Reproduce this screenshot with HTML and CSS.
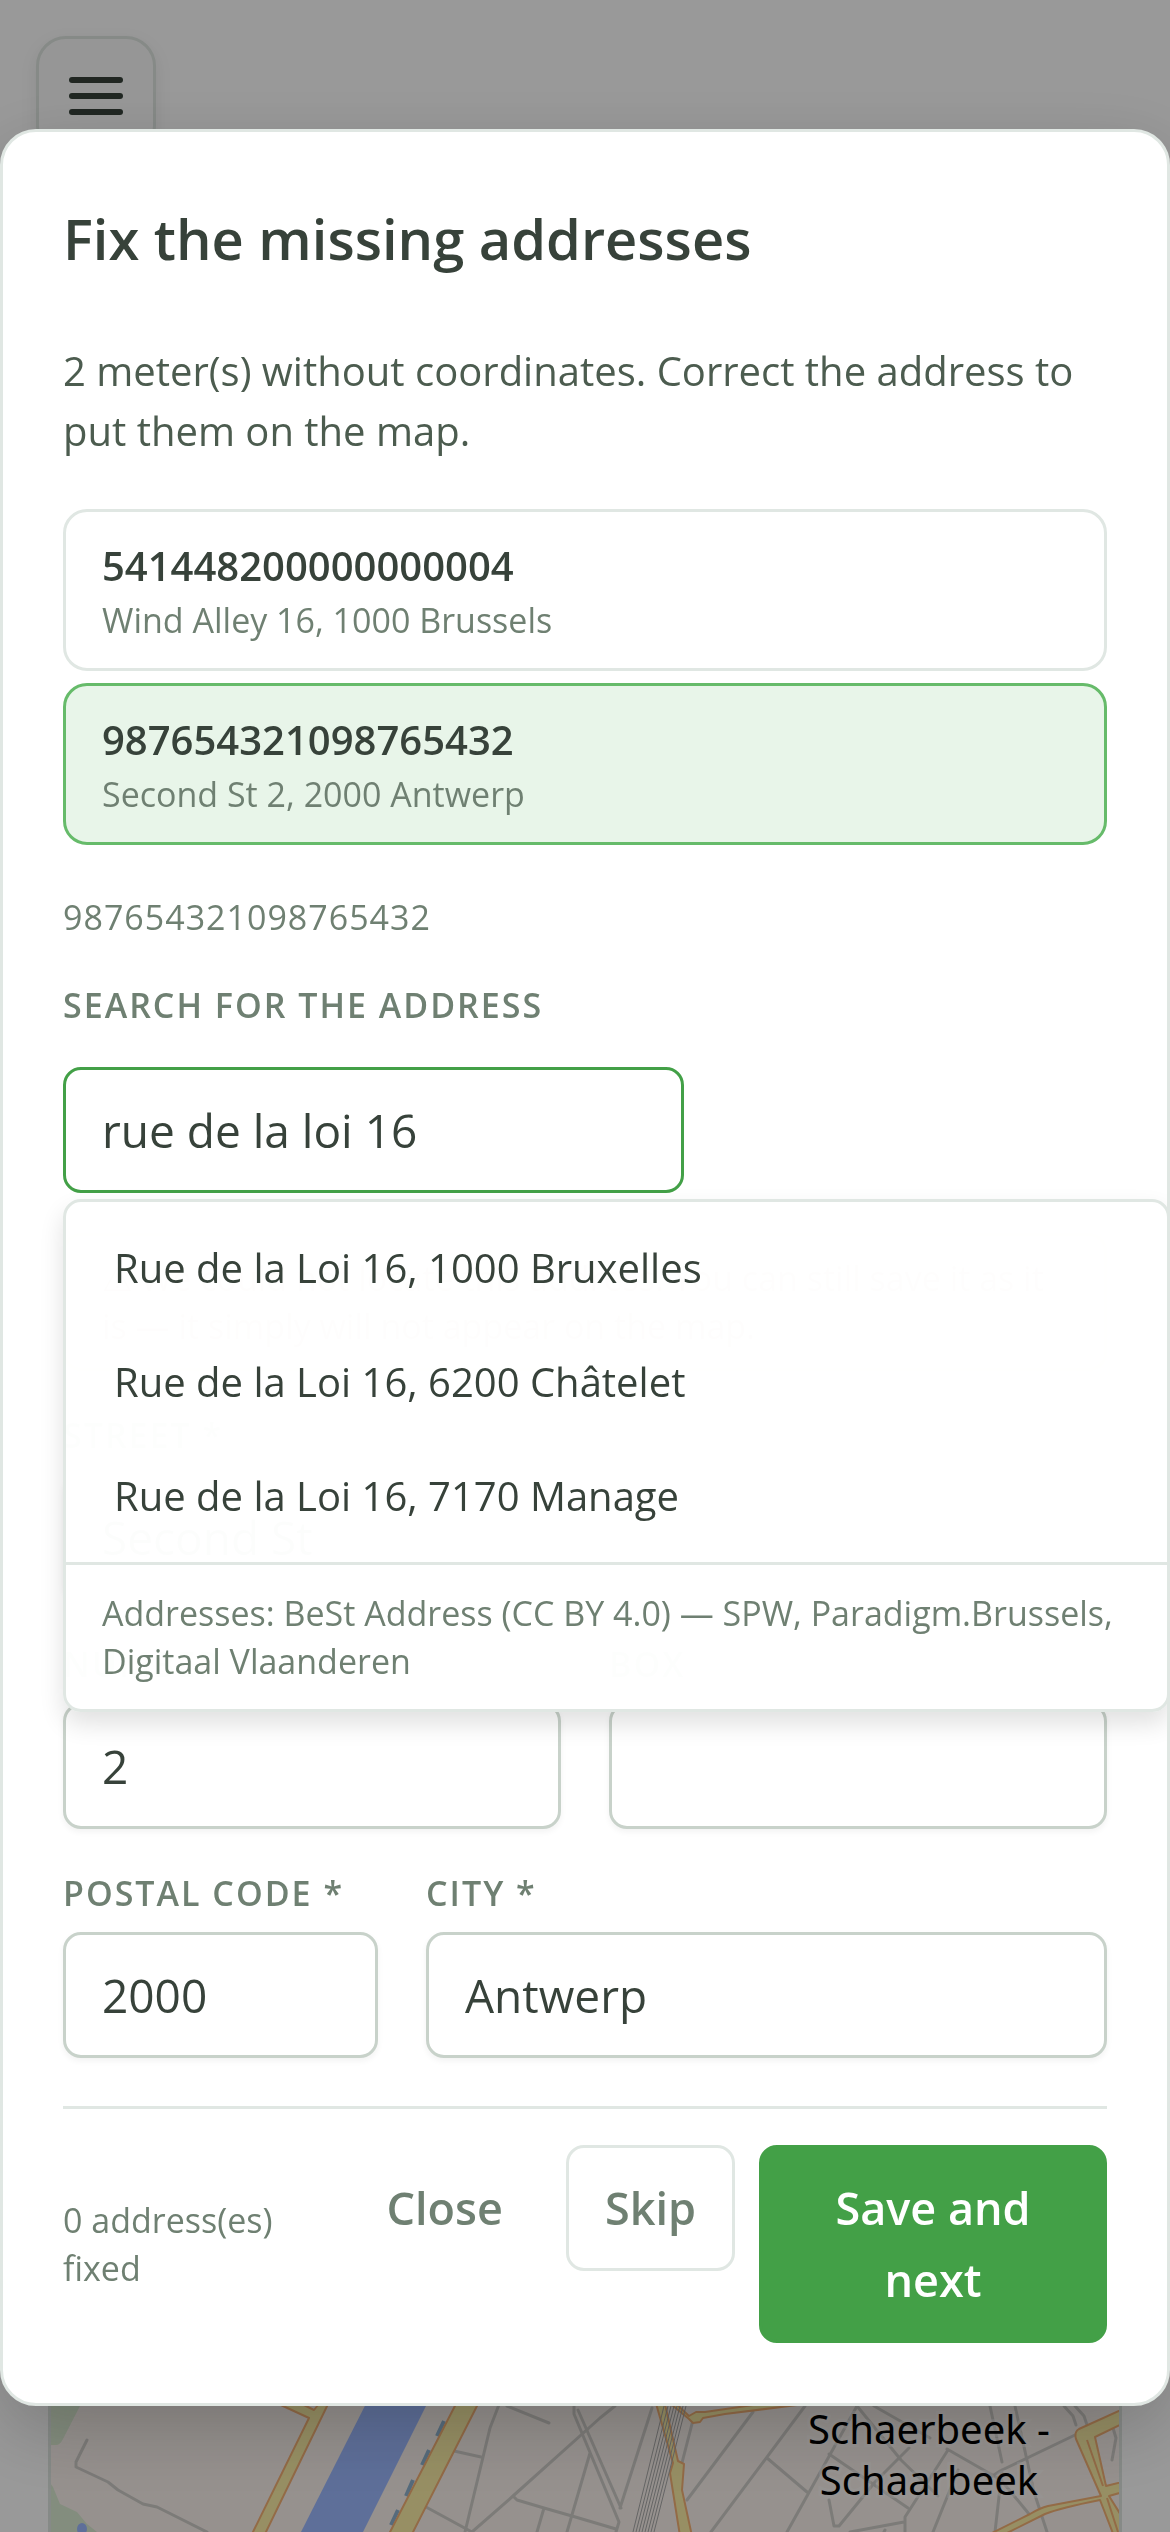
FILE: index.html
```html
<!DOCTYPE html>
<html lang="en">

<head>
    <meta charset="UTF-8">
    <meta name="viewport" content="width=device-width, initial-scale=1.0">
    <title>Fix the missing addresses</title>
    <link rel="stylesheet" href="styles.css">
</head>

<body>
    <!-- Page behind the dialog -->
    <div class="page">
        <header class="topbar">
            <button class="menu-btn" type="button" aria-label="Menu">
                <span class="menu-line"></span>
                <span class="menu-line"></span>
                <span class="menu-line"></span>
            </button>
        </header>

        <div class="map">
            <svg class="map-svg" viewBox="51 0 1068 152" preserveAspectRatio="xMidYMax slice" aria-hidden="true">
                <rect x="0" y="0" width="1170" height="152" fill="#faf2ed" />
                <!-- parks -->
                <path d="M48 0H92L80 26L63 59Q60 65 56 65H48ZM48 100L53 107L60 124L77 132L87 144L97 152H48Z" fill="#dbebd2" />
                <ellipse cx="82" cy="149" rx="5" ry="6" fill="#9db9ff" />
                <!-- canal -->
                <path d="M378 0H439L363 152H301Z" fill="#9db9ff" />
                <path d="M444 41L437 56M429 70L422 85M413 100L406 116M398 130L391 145" stroke="#8fb3cf" stroke-width="4" />
                <!-- streets -->
                <g fill="none" stroke="#cfcdc9" stroke-width="3" stroke-linejoin="round" stroke-linecap="round">
                    <path d="M87 60L76 82V87L108 102L118 110L143 124L157 127L207 152" />
                    <path d="M500 22L490 48L465 152M454 71L481 77M426 127L472 152M507 26L549 43" />
                    <path d="M472 152L513 116L600 38L615 26M513 116L517 120L544 128L572 136L616 149M544 128L537 152" />
                    <path d="M574 26V34L619 142L616 152M578 30L621 128M590 73L567 152M620 128L652 28" />
                    <path d="M693 40L675 110M753 32L687 120M805 26L711 152M767 78L807 112M857 26L787 152M829 74L908 128" />
                    <path d="M857 26L901 80L938 116M874 26L930 58M947 69L1001 100L1029 134M990 26L1002 82M1015 26L1034 112L1047 152" />
                    <path d="M829 120L834 146H839L875 102L909 68M948 70L905 137V152M850 152L904 142M1075 55L1000 91L988 99M1002 90L995 152M958 90L933 152M885 150L884 152" />
                    <path d="M1064 26L1073 36L1076 45M1075 26L1084 36L1087 45M1113 48L1116 58L1112 80" />
                </g>
                <!-- main roads -->
                <g stroke="#f5b276" stroke-width="2" fill="#fcefa7" stroke-linejoin="round">
                    <path d="M270 20L283 26L309 38L251 156H264L330 20L322 20L314 30L290 18Z" />
                    <path d="M458 20H480L411 156H388Z" />
                    <path d="M655 20L673 83L670 93L680 156H692L682 110L684 84L678 81L664 20ZM666 20L689 39L693 43L700 42L703 38L725 34L805 24V18L760 24L705 32L696 32L689 36L672 20Z" />
                    <path d="M1130 26L1079 49Q1074 52 1076 59L1101 116L1048 126Q1040 128 1030 134L990 154H1005L1045 134Q1060 128 1100 120L1114 156H1134L1109 116L1130 110V100L1106 106L1095 57L1130 40Z" />
                    <path d="M1087 60L1103 106M1107 118L1118 152" />
                </g>
                <!-- railway -->
                <path d="M664 26L633 152M668 26L636 152M671 26L639 152M674 26L642 152M677 26L645 152M680 26L648 152M683 26L651 152M686 26L654 152" fill="none" stroke="#a8a8a8" stroke-width="1" />
                <text class="map-label" x="929" y="64">Schaerbeek -</text>
                <text class="map-label" x="929" y="115">Schaarbeek</text>
            </svg>
        </div>
    </div>

    <!-- Dialog -->
    <div class="overlay">
        <div class="modal" role="dialog" aria-modal="true" aria-labelledby="modal-title">
            <h2 class="modal-title" id="modal-title">Fix the missing addresses</h2>
            <p class="modal-intro">2 meter(s) without coordinates. Correct the address to put them on the map.</p>

            <div class="meter-list">
                <button class="meter" type="button">
                    <span class="meter-id">541448200000000004</span>
                    <span class="meter-address">Wind Alley 16, 1000 Brussels</span>
                </button>
                <button class="meter selected" type="button">
                    <span class="meter-id">987654321098765432</span>
                    <span class="meter-address">Second St 2, 2000 Antwerp</span>
                </button>
            </div>

            <form class="address-form">
                <p class="current-id">987654321098765432</p>

                <div class="search">
                    <label class="field-label" for="search">Search for the address</label>
                    <input class="field-input search-input" type="text" id="search" value="rue de la loi 16" autocomplete="off">

                    <!-- Suggestions -->
                    <div class="suggestions">
                        <ul class="suggestion-list">
                            <li><button class="suggestion" type="button">Rue de la Loi 16, 1000 Bruxelles</button></li>
                            <li><button class="suggestion" type="button">Rue de la Loi 16, 6200 Châtelet</button></li>
                            <li><button class="suggestion" type="button">Rue de la Loi 16, 7170 Manage</button></li>
                        </ul>
                        <p class="attribution">Addresses: BeSt Address (CC BY 4.0) — SPW, Paradigm.Brussels, Digitaal Vlaanderen</p>
                    </div>
                </div>

                <p class="warning">⚠ We could not locate this address. You can still save it as it is — it simply will not appear on the map.</p>

                <div class="field">
                    <label class="field-label" for="street">Street *</label>
                    <input class="field-input" type="text" id="street" value="Second St">
                </div>

                <div class="field-row">
                    <div class="field">
                        <label class="field-label" for="number">Number *</label>
                        <input class="field-input" type="text" id="number" value="2">
                    </div>
                    <div class="field">
                        <label class="field-label" for="box">Box</label>
                        <input class="field-input" type="text" id="box">
                    </div>
                </div>

                <div class="field-row postal-row">
                    <div class="field">
                        <label class="field-label" for="postal">Postal code *</label>
                        <input class="field-input" type="text" id="postal" value="2000">
                    </div>
                    <div class="field">
                        <label class="field-label" for="city">City *</label>
                        <input class="field-input" type="text" id="city" value="Antwerp">
                    </div>
                </div>
            </form>

            <footer class="modal-footer">
                <p class="status">0 address(es) fixed</p>
                <div class="actions">
                    <button class="btn btn-ghost" type="button">Close</button>
                    <button class="btn btn-outline" type="button">Skip</button>
                    <button class="btn btn-primary" type="button">Save and next</button>
                </div>
            </footer>
        </div>
    </div>
</body>

</html>
```
FILE: styles.css
```css
/* Global Styles */
* {
    box-sizing: border-box;
}

body {
    margin: 0;
    font-family: "Open Sans", "Noto Sans", sans-serif;
    color: #37423a;
    background-color: #fff;
}

button,
input {
    font-family: inherit;
    color: inherit;
    margin: 0;
}

button {
    cursor: pointer;
}

p,
h2,
ul {
    margin: 0;
    padding: 0;
}

/* Page behind the dialog */
.page {
    display: flex;
    flex-direction: column;
    justify-content: space-between;
    height: 100vh;
    overflow: hidden;
}

.topbar {
    padding: 36px;
}

.menu-btn {
    display: flex;
    flex-direction: column;
    align-items: center;
    justify-content: center;
    gap: 10px;
    width: 120px;
    height: 120px;
    background: #fbfbfb;
    border: 3px solid #dfe6e1;
    border-radius: 30px;
    box-shadow: 0 6px 18px rgba(0, 0, 0, 0.08);
}

.menu-line {
    width: 54px;
    height: 6px;
    border-radius: 3px;
    background: #37423a;
}

.map {
    margin: 0 48px;
    border: solid #dfe6e1;
    border-width: 0 3px;
}

.map-svg {
    display: block;
    width: 100%;
    height: 152px;
}

.map-label {
    font-family: "Noto Sans", sans-serif;
    font-size: 40px;
    text-anchor: middle;
    fill: #000;
    stroke: rgba(255, 255, 255, 0.4);
    stroke-width: 6px;
    paint-order: stroke;
}

/* Dialog */
.overlay {
    position: fixed;
    inset: 0;
    display: flex;
    align-items: center;
    padding-top: 3px;
    background: rgba(0, 0, 0, 0.4);
}

.modal {
    width: 100%;
    padding: 60px;
    background: #fff;
    border: 3px solid #e0e7e3;
    border-radius: 36px;
    box-shadow: 0 24px 72px rgba(0, 0, 0, 0.2);
    overflow: hidden;
}

.modal-title {
    font-size: 56px;
    font-weight: 600;
    line-height: 93px;
    margin-bottom: 56px;
}

.modal-intro {
    font-size: 40px;
    line-height: 60px;
    margin-bottom: 48px;
    color: #4c5c4f;
}

/* Meter list */
.meter-list {
    display: flex;
    flex-direction: column;
    gap: 12px;
    margin-bottom: 48px;
}

.meter {
    display: flex;
    flex-direction: column;
    padding: 24px 36px;
    text-align: left;
    background: #fff;
    border: 3px solid #e0e7e3;
    border-radius: 24px;
}

.meter.selected {
    background: #e8f5e9;
    border-color: #66bb6a;
}

.meter-id {
    font-size: 40px;
    font-weight: 600;
    line-height: 60px;
}

.meter-address {
    font-size: 34px;
    line-height: 48px;
    color: #6f8072;
}

/* Address form */
.address-form {
    display: flex;
    flex-direction: column;
    gap: 40px;
}

.current-id {
    font-size: 34px;
    line-height: 48px;
    letter-spacing: 1px;
    color: #6f8072;
}

.search {
    position: relative;
    display: flex;
    flex-direction: column;
    align-items: flex-start;
    gap: 38px;
}

.field {
    display: flex;
    flex-direction: column;
    gap: 15px;
}

.field-row {
    display: grid;
    grid-template-columns: 1fr 1fr;
    gap: 48px;
}

.postal-row {
    grid-template-columns: 315px 1fr;
}

.field-label {
    font-size: 34px;
    font-weight: 600;
    line-height: 48px;
    letter-spacing: 2px;
    text-transform: uppercase;
    color: #6f8072;
}

.field-input {
    width: 100%;
    height: 126px;
    padding: 0 36px;
    font-size: 46px;
    background: #fff;
    border: 3px solid #c8d2ca;
    border-radius: 18px;
    box-shadow: 0 3px 6px rgba(0, 0, 0, 0.05);
    outline: none;
}

.search-input {
    width: 621px;
    max-width: 100%;
    border-color: #43a047;
    box-shadow: none;
}

.warning {
    padding: 18px 36px;
    font-size: 34px;
    line-height: 48px;
    color: #8a7a4a;
    background: #fffdf3;
    border: 3px solid #f2dc8c;
    border-radius: 18px;
}

/* Suggestions */
.suggestions {
    position: absolute;
    top: 100%;
    left: 0;
    right: -63px;
    z-index: 10;
    margin-top: 6px;
    background: rgba(255, 255, 255, 0.99);
    border: 3px solid #e0e7e3;
    border-radius: 18px;
    box-shadow: 0 12px 24px rgba(0, 0, 0, 0.12);
}

.suggestion-list {
    padding: 9px;
    list-style: none;
}

.suggestion {
    display: block;
    width: 100%;
    padding: 27px 39px;
    font-size: 40px;
    line-height: 60px;
    text-align: left;
    background: none;
    border: none;
}

.attribution {
    padding: 24px 36px;
    font-size: 34px;
    line-height: 48px;
    color: #6f8072;
    border-top: 3px solid #e0e7e3;
}

/* Footer */
.modal-footer {
    display: flex;
    align-items: center;
    justify-content: space-between;
    gap: 24px;
    margin-top: 48px;
    padding-top: 36px;
    border-top: 3px solid #e0e7e3;
}

.status {
    flex: 0 1 259px;
    font-size: 34px;
    line-height: 48px;
    color: #6f8072;
}

.actions {
    display: flex;
    align-items: flex-start;
    gap: 24px;
}

.btn {
    padding: 24px 36px;
    font-size: 45px;
    font-weight: 600;
    line-height: 72px;
    color: #6f8072;
    background: none;
    border: 3px solid transparent;
    border-radius: 18px;
}

.btn-outline {
    background: #fff;
    border-color: #e0e7e3;
}

.btn-primary {
    width: 348px;
    color: #fff;
    background: #43a047;
    border-color: #43a047;
}
```
